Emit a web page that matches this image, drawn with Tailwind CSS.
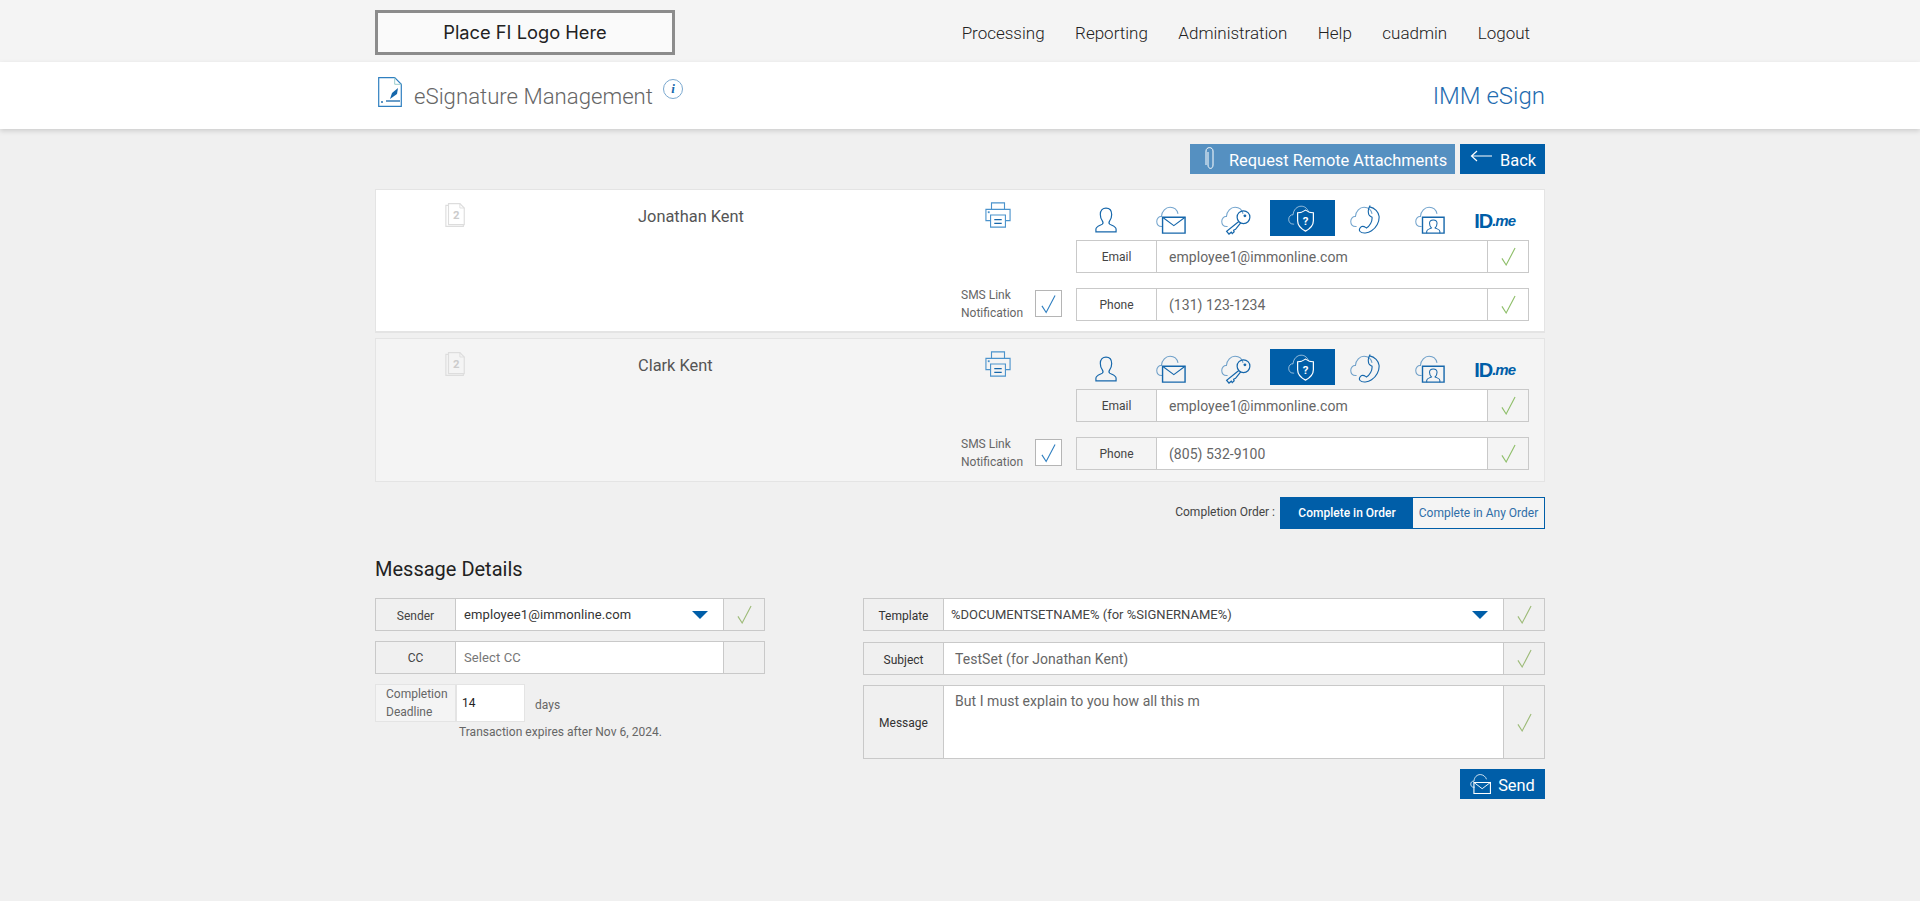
<!DOCTYPE html>
<html lang="en">
  <head>
    <meta charset="UTF-8" />
    <meta name="viewport" content="width=device-width, initial-scale=1.0" />
    <title>eSignature Management</title>
    <script src="https://cdn.jsdelivr.net/npm/@tailwindcss/browser@4"></script>
  </head>

  <body class="bg-[#f0f0f0] font-['Roboto',sans-serif] text-[#555] h-[901px] overflow-hidden">
    <svg class="hidden">
      <symbol id="check" viewBox="0 0 16 20"><path d="M1 12l4.500 7L15 1" fill="none" stroke="currentColor" stroke-width="1.200"/></symbol>
      <symbol id="cloud" viewBox="0 0 32 32"><path d="M7 23H6C2.500 23 .8 20.500.8 17.500.8 14.500 3 12 5.800 12.300 6.200 6.500 10.500 2.500 15 2.500c4 0 7.500 2.500 8.500 7" fill="none" stroke="currentColor" stroke-width="1.100" opacity=".6"/></symbol>
      <symbol id="doc2" viewBox="0 0 24 28"><path d="M4 3H1v24h20v-2" fill="none" stroke="#ddd" stroke-width="1.300"/><path d="M4 1h13l5 5v19H4z" fill="none" stroke="#ddd" stroke-width="1.300"/><path d="M17 1v5h5" fill="none" stroke="#ddd"/><text x="13" y="19" text-anchor="middle" font-size="13" font-weight="700" fill="#ccc" font-family="Roboto">2</text></symbol>
      <symbol id="printer" viewBox="0 0 28 28"><g fill="none" stroke="#4b93cc" stroke-width="1.200"><path d="M7 8V1h14v7"/><path d="M6 20H1V8h26v12h-5"/><path d="M6 14h16v13H6z"/><path d="M10 19h8M10 23h8" stroke="#1667ab" stroke-width="1.500"/></g><path d="M3 10h2v2H3z" fill="#4b93cc"/></symbol>
      <symbol id="user" viewBox="0 0 24 28"><path d="M1 27v-3c0-3 5-4 7-5.500.9-.8.7-2.500 0-3.500-1.500-2-2.200-4-2.200-7C5.800 3.500 8.500 1 12 1s6.200 2.500 6.200 7c0 3-.7 5-2.200 7-.7 1-.9 2.700 0 3.500C18 20 23 21 23 24v3z" fill="none" stroke="currentColor" stroke-width="1.300"/></symbol>
      <symbol id="cloudmail" viewBox="0 0 32 32"><use href="#cloud"/><path d="M7 13h24v17H7z" fill="none" stroke="currentColor" stroke-width="1.500"/><path d="M7 13l12 9 12-9" fill="none" stroke="currentColor" stroke-width="1.200"/></symbol>
      <symbol id="cloudkey" viewBox="0 0 32 32"><use href="#cloud"/><circle cx="24" cy="13" r="6.800" fill="none" stroke="currentColor" stroke-width="1.300"/><circle cx="25.500" cy="11.500" r="1.500" fill="currentColor"/><path d="M19 17.500L6 28l2.500 3 2.500-2 1 1.500 2-2-.5-1.500 2-1 5.500-7" fill="none" stroke="currentColor" stroke-width="1.300"/></symbol>
      <symbol id="cloudshield" viewBox="0 0 32 32"><use href="#cloud"/><path d="M20 7c3 2.200 6 3 9 3v9c0 5.500-4.500 9.500-9 12-4.500-2.500-9-6.500-9-12v-9c3 0 6-.8 9-3z" fill="none" stroke="currentColor" stroke-width="1.400"/><text x="20" y="24" text-anchor="middle" font-size="13" font-weight="700" fill="currentColor" font-family="Roboto">?</text></symbol>
      <symbol id="cloudphone" viewBox="0 0 32 32"><use href="#cloud"/><path d="M21 2c5.500 1 9.500 5.500 10 10 .5 6-3 12.500-8 15.500-3.500 2.500-10 3.500-12.500.5-1.200-1.700 0-4 2-5 2-.8 3.500.5 5 1.500 3.500-2 6.500-7 6-11.500-1.500-.8-3-1-3.500-3-.5-2.500-1.500-5 1-8.500z" fill="none" stroke="currentColor" stroke-width="1.200"/></symbol>
      <symbol id="cloudperson" viewBox="0 0 32 32"><use href="#cloud"/><path d="M8 13h23v17H8z" fill="none" stroke="currentColor" stroke-width="1.500"/><path d="M12.500 30v-2c0-2 3-2.500 5-3.500-1.500-1.500-2-3-2-5 0-2.200 1.700-3.500 4-3.500s4 1.300 4 3.500c0 2-.5 3.500-2 5 2 1 5 1.500 5 3.500v2" fill="none" stroke="currentColor" stroke-width="1.100"/></symbol>
      <symbol id="sendicon" viewBox="0 0 28 28"><path d="M6 18H4C2 18 1 16 1 14c0-2 1.500-4 4-3.500C5.500 5 9 2 13 2c3.500 0 7 2.500 8 6" fill="none" stroke="currentColor" stroke-width="1"/><path d="M5 12h21v14H5z" fill="none" stroke="currentColor" stroke-width="1.400"/><path d="M5 12l10.500 8L26 12" fill="none" stroke="currentColor" stroke-width="1.200"/></symbol>
    </svg>

    <div class="bg-[#f4f4f4] h-[62px]">
      <div class="w-[1170px] mx-auto flex justify-between pt-[10px]">
        <div class="w-[300px] h-[45px] border-[3px] border-[#8c8c8c] bg-[#fafafa] flex items-center justify-center font-['Inter',sans-serif] text-[18.300px] text-[#222]">Place FI Logo Here</div>
        <nav class="flex gap-[30.500px] pr-[15px] pt-[13px] text-[17px] font-light text-[#222] leading-[20px]">
          <span>Processing</span><span>Reporting</span><span>Administration</span><span>Help</span><span>cuadmin</span><span>Logout</span>
        </nav>
      </div>
    </div>

    <div class="bg-white h-[67px] shadow-[0_2px_5px_rgba(0,0,0,0.15)] relative">
      <div class="w-[1170px] mx-auto flex items-start justify-between">
        <div class="flex items-start">
          <svg class="ml-[3px] mt-[15px]" width="24" height="30" viewBox="0 0 24 30">
            <path d="M.7.700h16l6.600 6.600v22H.7z" fill="none" stroke="#2f7fc0" stroke-width="1.200"/>
            <path d="M16.700.700v6.600h6.600" fill="none" stroke="#9cc" stroke-width="1"/>
            <path d="M8 24h14" stroke="#1667ab" stroke-width="1.300"/>
            <path d="M12 22l2-6 6-5-1 6z" fill="#1667ab"/>
            <path d="M3 24l2 2M5 24l-2 2" stroke="#1667ab" stroke-width=".7"/>
          </svg>
          <h1 class="ml-[12px] mt-[18px] text-[22.200px] leading-[32px] font-light text-[#666]">eSignature Management</h1>
          <span class="ml-[10px] mt-[17px] w-[20px] h-[20px] rounded-full border border-[#7aa8cf] flex items-center justify-center font-['Liberation_Serif',serif] italic font-bold text-[13px] text-[#1667ab]">i</span>
        </div>
        <div class="mt-[18px] text-[24px] leading-[32px] font-light text-[#1f6cb0]">IMM eSign</div>
      </div>
    </div>

    <div class="w-[1170px] mx-auto">
      <div class="flex justify-end gap-[5px] pt-[15px]">
        <button class="h-[30px] w-[265px] bg-[#5590c1] text-white text-[16.400px] flex items-center pl-[15px]">
          <svg width="10" height="24" viewBox="0 0 10 24" class="mr-[14px] mb-[3px]"><path d="M3 6v13c0 4.500 5 4.500 5 0V5C8 .500 1 .500 1 5v14" fill="none" stroke="#fff" stroke-width="1"/></svg>
          <span class="pt-[5px]">Request Remote Attachments</span>
        </button>
        <button class="h-[30px] w-[85px] bg-[#005ea8] text-white text-[16.400px] flex items-center pl-[10px]">
          <svg width="22" height="12" viewBox="0 0 22 12" class="mr-[8px] mb-[6px]"><path d="M22 6H2M7 1L1.500 6 7 11" fill="none" stroke="#fff" stroke-width="1.200"/></svg>
          <span class="pt-[5px]">Back</span>
        </button>
      </div>

      <!-- signers -->
      <div class="mt-[15px] h-[144px] bg-white border border-[#e4e4e4] border-b-2 flex relative">
        <svg class="ml-[69px] mt-[12px]" width="21" height="26"><use href="#doc2"/></svg>
        <div class="ml-[172px] mt-[17px] text-[16.400px] leading-[20px] text-[#555] w-[350px]">Jonathan Kent</div>
        <svg class="mt-[12px] -ml-[3px]" width="26" height="26"><use href="#printer"/></svg>
        <div class="absolute left-[700px] top-[10px] w-[453px]">
          <div class="grid grid-cols-7 h-[30px] text-[#1667ab]">
            <div class="flex items-center justify-center pt-[4px] pr-[4px]"><svg width="22" height="26"><use href="#user"/></svg></div>
            <div class="flex items-center justify-center pt-[4px] pr-[4px]"><svg width="30" height="30"><use href="#cloudmail"/></svg></div>
            <div class="flex items-center justify-center pt-[4px] pr-[4px]"><svg width="30" height="30"><use href="#cloudkey"/></svg></div>
            <div class="flex items-center justify-center bg-[#005ea8] text-white"><svg width="28" height="28"><use href="#cloudshield"/></svg></div>
            <div class="flex items-center justify-center pt-[4px] pr-[4px]"><svg width="30" height="30"><use href="#cloudphone"/></svg></div>
            <div class="flex items-center justify-center pt-[4px] pr-[4px]"><svg width="30" height="30"><use href="#cloudperson"/></svg></div>
            <div class="flex items-center justify-center pt-[6px] pr-[4px] font-['Liberation_Sans',sans-serif] font-bold text-[20px] tracking-[-1px] text-[#005ea8]">ID<span class="text-[15px] italic">.me</span></div>
          </div>
          <div class="mt-[10px] flex h-[33px] border border-[#c9c9c9] bg-white text-[12px]">
            <div class="w-[80px] border-r border-[#c9c9c9] flex items-center justify-center text-[#444] pt-[1px]">Email</div>
            <div class="flex-1 pl-[12px] pt-[1px] flex items-center text-[14px] tracking-[0.05px] text-[#666]">employee1@immonline.com</div>
            <div class="w-[41px] border-l border-[#c9c9c9] flex items-center justify-center text-[#8fbf6a]"><svg width="15" height="19"><use href="#check"/></svg></div>
          </div>
          <div class="mt-[15px] flex h-[33px] border border-[#c9c9c9] bg-white text-[12px]">
            <div class="w-[80px] border-r border-[#c9c9c9] flex items-center justify-center text-[#444] pt-[1px]">Phone</div>
            <div class="flex-1 pl-[12px] pt-[1px] flex items-center text-[14px] tracking-[0.05px] text-[#666]">(131) 123-1234</div>
            <div class="w-[41px] border-l border-[#c9c9c9] flex items-center justify-center text-[#8fbf6a]"><svg width="15" height="19"><use href="#check"/></svg></div>
          </div>
        </div>
        <div class="absolute left-[585px] top-[97px] flex items-start">
          <div class="w-[68px] text-[12px] leading-[17.500px] text-[#666]">SMS Link Notification</div>
          <div class="ml-[6px] mt-[3px] w-[27px] h-[27px] border border-[#b5b5b5] bg-white flex items-center justify-center text-[#2f7fc0]"><svg width="15" height="20"><use href="#check"/></svg></div>
        </div>
      </div>

      <div class="mt-[5px] h-[144px] bg-[#f4f4f4] border border-[#e4e4e4] flex relative">
        <svg class="ml-[69px] mt-[12px]" width="21" height="26"><use href="#doc2"/></svg>
        <div class="ml-[172px] mt-[17px] text-[16.400px] leading-[20px] text-[#555] w-[350px]">Clark Kent</div>
        <svg class="mt-[12px] -ml-[3px]" width="26" height="26"><use href="#printer"/></svg>
        <div class="absolute left-[700px] top-[10px] w-[453px]">
          <div class="grid grid-cols-7 h-[30px] text-[#1667ab]">
            <div class="flex items-center justify-center pt-[4px] pr-[4px]"><svg width="22" height="26"><use href="#user"/></svg></div>
            <div class="flex items-center justify-center pt-[4px] pr-[4px]"><svg width="30" height="30"><use href="#cloudmail"/></svg></div>
            <div class="flex items-center justify-center pt-[4px] pr-[4px]"><svg width="30" height="30"><use href="#cloudkey"/></svg></div>
            <div class="flex items-center justify-center bg-[#005ea8] text-white"><svg width="28" height="28"><use href="#cloudshield"/></svg></div>
            <div class="flex items-center justify-center pt-[4px] pr-[4px]"><svg width="30" height="30"><use href="#cloudphone"/></svg></div>
            <div class="flex items-center justify-center pt-[4px] pr-[4px]"><svg width="30" height="30"><use href="#cloudperson"/></svg></div>
            <div class="flex items-center justify-center pt-[6px] pr-[4px] font-['Liberation_Sans',sans-serif] font-bold text-[20px] tracking-[-1px] text-[#005ea8]">ID<span class="text-[15px] italic">.me</span></div>
          </div>
          <div class="mt-[10px] flex h-[33px] border border-[#c9c9c9] bg-white text-[12px]">
            <div class="w-[80px] border-r border-[#c9c9c9] bg-[#f4f4f4] flex items-center justify-center text-[#444] pt-[1px]">Email</div>
            <div class="flex-1 pl-[12px] pt-[1px] flex items-center text-[14px] tracking-[0.05px] text-[#666]">employee1@immonline.com</div>
            <div class="w-[41px] border-l border-[#c9c9c9] bg-[#f4f4f4] flex items-center justify-center text-[#8fbf6a]"><svg width="15" height="19"><use href="#check"/></svg></div>
          </div>
          <div class="mt-[15px] flex h-[33px] border border-[#c9c9c9] bg-white text-[12px]">
            <div class="w-[80px] border-r border-[#c9c9c9] bg-[#f4f4f4] flex items-center justify-center text-[#444] pt-[1px]">Phone</div>
            <div class="flex-1 pl-[12px] pt-[1px] flex items-center text-[14px] tracking-[0.05px] text-[#666]">(805) 532-9100</div>
            <div class="w-[41px] border-l border-[#c9c9c9] bg-[#f4f4f4] flex items-center justify-center text-[#8fbf6a]"><svg width="15" height="19"><use href="#check"/></svg></div>
          </div>
        </div>
        <div class="absolute left-[585px] top-[97px] flex items-start">
          <div class="w-[68px] text-[12px] leading-[17.500px] text-[#666]">SMS Link Notification</div>
          <div class="ml-[6px] mt-[3px] w-[27px] h-[27px] border border-[#b5b5b5] bg-white flex items-center justify-center text-[#2f7fc0]"><svg width="15" height="20"><use href="#check"/></svg></div>
        </div>
      </div>

      <div class="mt-[15px] flex justify-end items-start">
        <span class="text-[12px] leading-[18px] text-[#444] mt-[6px] mr-[5px]">Completion Order :</span>
        <div class="flex h-[32px] w-[265px] border border-[#005ea8] text-[12px]">
          <div class="w-[132px] bg-[#005ea8] text-white font-medium flex items-center justify-center">Complete in Order</div>
          <div class="flex-1 flex items-center justify-center text-[#2f6ea8] bg-[#f4f4f4]">Complete in Any Order</div>
        </div>
      </div>

      <h2 class="mt-[27px] text-[20px] leading-[26px] text-[#222]">Message Details</h2>

      <div class="mt-[16px] flex items-start">
        <div class="w-[390px]">
          <div class="flex h-[33px] border border-[#c9c9c9] text-[12px]">
            <div class="w-[80px] border-r border-[#c9c9c9] flex items-center justify-center text-[#444] pt-[3px]">Sender</div>
            <div class="flex-1 bg-white pl-[8px] pr-[15px] pt-[1px] flex items-center justify-between text-[13px] tracking-[0.1px] text-[#333]">employee1@immonline.com
              <svg width="16" height="9" viewBox="0 0 16 9"><path d="M0 0h16L8 8z" fill="#005ea8"/></svg>
            </div>
            <div class="w-[41px] border-l border-[#c9c9c9] flex items-center justify-center text-[#9dbb78]"><svg width="15" height="19"><use href="#check"/></svg></div>
          </div>
          <div class="mt-[10px] flex h-[33px] border border-[#c9c9c9] text-[12px]">
            <div class="w-[80px] border-r border-[#c9c9c9] flex items-center justify-center text-[#444] pt-[1px]">CC</div>
            <div class="flex-1 bg-white pl-[8px] flex items-center text-[13px] tracking-[0.1px] text-[#777]">Select CC</div>
            <div class="w-[41px] border-l border-[#c9c9c9]"></div>
          </div>
          <div class="mt-[10px] flex items-start">
            <div class="w-[81px] h-[38px] bg-[#f4f4f4] border border-[#e4e4e4] text-[12px] leading-[18px] pl-[10px] text-[#666]">Completion Deadline</div>
            <div class="w-[69px] h-[38px] bg-white border border-[#e4e4e4] pl-[5px] flex items-center text-[12px] text-[#222]">14</div>
            <span class="ml-[10px] mt-[12px] text-[12px] leading-[18px] text-[#666]">days</span>
          </div>
          <div class="ml-[84px] mt-[1px] text-[12px] tracking-[0.03px] leading-[18px] text-[#666]">Transaction expires after Nov 6, 2024.</div>
        </div>

        <div class="ml-[98px] w-[682px]">
          <div class="flex h-[33px] border border-[#c9c9c9] text-[12px]">
            <div class="w-[80px] border-r border-[#c9c9c9] flex items-center justify-center text-[#333] pt-[3px]">Template</div>
            <div class="flex-1 bg-white pl-[7px] pr-[15px] pt-[1px] flex items-center justify-between text-[13px] text-[#444]">%DOCUMENTSETNAME% (for %SIGNERNAME%)
              <svg width="16" height="9" viewBox="0 0 16 9"><path d="M0 0h16L8 8z" fill="#005ea8"/></svg>
            </div>
            <div class="w-[41px] border-l border-[#c9c9c9] flex items-center justify-center text-[#9dbb78]"><svg width="15" height="19"><use href="#check"/></svg></div>
          </div>
          <div class="mt-[11px] flex h-[33px] border border-[#c9c9c9] text-[12px]">
            <div class="w-[80px] border-r border-[#c9c9c9] flex items-center justify-center text-[#333] pt-[3px]">Subject</div>
            <div class="flex-1 bg-white pl-[11px] flex items-center text-[14px] tracking-[0.05px] text-[#666] pt-[2px]">TestSet (for Jonathan Kent)</div>
            <div class="w-[41px] border-l border-[#c9c9c9] flex items-center justify-center text-[#9dbb78]"><svg width="15" height="19"><use href="#check"/></svg></div>
          </div>
          <div class="mt-[10px] flex h-[74px] border border-[#c9c9c9] text-[12px]">
            <div class="w-[80px] border-r border-[#c9c9c9] flex items-center justify-center text-[#333] pt-[1px]">Message</div>
            <div class="flex-1 bg-white pl-[11px] pt-[5px] text-[14px] tracking-[0.05px] leading-[20px] text-[#666]">But I must explain to you how all this m</div>
            <div class="w-[41px] border-l border-[#c9c9c9] flex items-center justify-center text-[#9dbb78]"><svg width="15" height="19"><use href="#check"/></svg></div>
          </div>
          <div class="mt-[10px] flex justify-end">
            <button class="h-[30px] w-[85px] bg-[#005ea8] text-white text-[16.400px] flex items-center justify-center gap-[6px]">
              <svg width="22" height="22"><use href="#sendicon"/></svg>
              <span class="pt-[4px]">Send</span>
            </button>
          </div>
        </div>
      </div>
    </div>
  </body>
</html>
